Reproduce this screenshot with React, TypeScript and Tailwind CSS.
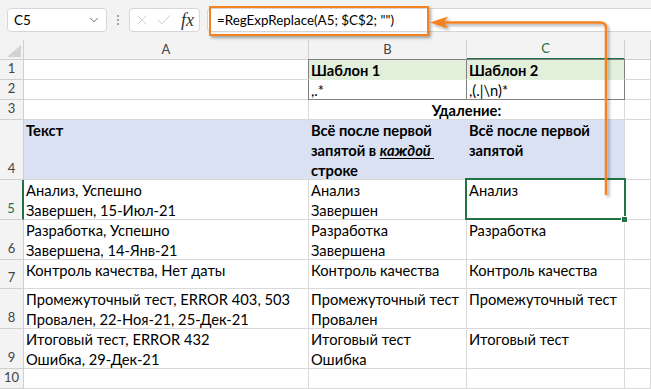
import { X, Check, ChevronDown } from "lucide-react";

const grid = "border-r border-b border-[#d9d9d9]";
const hdr = "bg-[#f3f3f3] border-r border-b border-[#cfcfcf] text-[13px] text-[#444]";

function RowNum({ n, active = false }: { n: number; active?: boolean }) {
  return (
    <div
      className={`${hdr} flex items-end justify-center leading-[19px] pb-px ${
        active ? "bg-[#dcdcdc] border-r-2 border-r-[#217346] text-[#217346]" : ""
      }`}
    >
      {n}
    </div>
  );
}

function Cell({ lines, className = "" }: { lines?: React.ReactNode[]; className?: string }) {
  return (
    <div className={`${grid} pl-[2px] leading-[20px] whitespace-nowrap overflow-visible ${className}`}>
      {lines?.map((l, i) => (
        <div key={i}>{l}</div>
      ))}
    </div>
  );
}

function Toolbar() {
  return (
    <div className="h-[40px] bg-[#f3f3f3] flex items-center pl-[7px]">
      <div className="w-[100px] h-[24px] bg-white border border-[#d6d6d6] rounded-[4px] flex items-center justify-between pl-[6px] pr-[5px] text-[13.5px] text-black">
        <span>C5</span>
        <ChevronDown size={14} strokeWidth={1.5} className="text-[#555]" />
      </div>
      <div className="w-[22px] flex flex-col items-center gap-[2px]">
        <span className="w-[2px] h-[2px] bg-[#8a8a8a] rounded-full" />
        <span className="w-[2px] h-[2px] bg-[#8a8a8a] rounded-full" />
        <span className="w-[2px] h-[2px] bg-[#8a8a8a] rounded-full" />
      </div>
      <div className="w-[71px] h-[24px] bg-white border border-[#d6d6d6] rounded-[4px] flex items-center pl-[4px]">
        <X size={16} strokeWidth={1.2} className="text-[#c4c4c4]" />
        <Check size={18} strokeWidth={1.2} className="text-[#c4c4c4] ml-[5px]" />
        <span className="font-['Liberation_Serif',serif] italic text-[18px] leading-none text-[#333] ml-[8px]">fx</span>
      </div>
      <div className="flex-1 ml-[7px] h-[24px] bg-white border border-[#d6d6d6] border-r-0 rounded-l-[4px] flex items-center pl-[9px] text-[13.4px] text-black">
        =RegExpReplace(A5; $C$2; "")
      </div>
    </div>
  );
}

export default function App() {
  return (
    <div className="w-[651px] h-[389px] bg-white overflow-hidden relative font-['Lato',sans-serif] text-[14.7px] text-black">
      <Toolbar />
      <div className="grid grid-cols-[24px_285px_158px_158px_1fr] grid-rows-[20px_20px_20px_20px_60px_40px_40px_29px_40px_40px_20px]">
        {/* column headers */}
        <div className={`${hdr} relative`}>
          <div className="absolute right-[2px] bottom-[2px] w-0 h-0 border-l-[14px] border-l-transparent border-b-[12px] border-b-[#d2d2d2]" />
        </div>
        <div className={`${hdr} flex items-center justify-center`}>A</div>
        <div className={`${hdr} flex items-center justify-center`}>B</div>
        <div className={`${hdr} flex items-center justify-center bg-[#dcdcdc] border-b-2 border-b-[#217346] text-[#217346]`}>C</div>
        <div className={hdr} />

        {/* row 1 */}
        <RowNum n={1} />
        <Cell />
        <Cell
          className="bg-[#e2efda] font-bold border-l border-l-[#808080] border-r-[#808080] border-t border-t-[#808080] border-b-[#e2efda] -ml-px -mt-px"
          lines={["Шаблон 1"]}
        />
        <Cell
          className="bg-[#e2efda] font-bold border-r-[#808080] border-t border-t-[#808080] border-b-[#e2efda] -mt-px"
          lines={["Шаблон 2"]}
        />
        <Cell />

        {/* row 2 */}
        <RowNum n={2} />
        <Cell />
        <Cell className="border-l border-l-[#808080] border-r-[#808080] border-b-[#808080] -ml-px" lines={[",.*"]} />
        <Cell className="border-r-[#808080] border-b-[#808080]" lines={[",(.|\\n)*"]} />
        <Cell />

        {/* row 3 */}
        <RowNum n={3} />
        <Cell />
        <div className={`${grid} col-span-2 text-center font-bold leading-[20px]`}>Удаление:</div>
        <Cell />

        {/* row 4 */}
        <RowNum n={4} />
        <Cell className="bg-[#d9e1f2] border-r-[#d9e1f2] font-bold" lines={["Текст"]} />
        <Cell
          className="bg-[#d9e1f2] border-r-[#d9e1f2] font-bold"
          lines={[
            "Всё после первой",
            <>
              запятой в <span className="italic underline underline-offset-2">каждой&nbsp;</span>
            </>,
            "строке",
          ]}
        />
        <Cell className="bg-[#d9e1f2] font-bold" lines={["Всё после первой", "запятой"]} />
        <Cell />

        {/* row 5 */}
        <RowNum n={5} active />
        <Cell lines={["Анализ, Успешно", "Завершен, 15-Июл-21"]} />
        <Cell lines={["Анализ", "Завершен"]} />
        <Cell lines={["Анализ"]} />
        <Cell />

        {/* row 6 */}
        <RowNum n={6} />
        <Cell lines={["Разработка, Успешно", "Завершена, 14-Янв-21"]} />
        <Cell lines={["Разработка", "Завершена"]} />
        <Cell lines={["Разработка"]} />
        <Cell />

        {/* row 7 */}
        <RowNum n={7} />
        <Cell lines={["Контроль качества, Нет даты"]} />
        <Cell lines={["Контроль качества"]} />
        <Cell lines={["Контроль качества"]} />
        <Cell />

        {/* row 8 */}
        <RowNum n={8} />
        <Cell lines={["Промежуточный тест, ERROR 403, 503", "Провален, 22-Ноя-21, 25-Дек-21"]} />
        <Cell lines={["Промежуточный тест", "Провален"]} />
        <Cell lines={["Промежуточный тест"]} />
        <Cell />

        {/* row 9 */}
        <RowNum n={9} />
        <Cell lines={["Итоговый тест, ERROR 432", "Ошибка, 29-Дек-21"]} />
        <Cell lines={["Итоговый тест", "Ошибка"]} />
        <Cell lines={["Итоговый тест"]} />
        <Cell />

        {/* row 10 */}
        <RowNum n={10} />
        <Cell />
        <Cell />
        <Cell />
        <Cell />
      </div>

      {/* selected cell C5 */}
      <div className="absolute left-[465px] top-[178px] w-[161px] h-[42px] border-2 border-[#217346] pointer-events-none" />
      <div className="absolute left-[621px] top-[216px] w-[7px] h-[7px] bg-[#217346] border border-white pointer-events-none" />

      {/* annotation */}
      <div className="absolute left-[209px] top-[6px] w-[220px] h-[30px] border-2 border-[#f58220] shadow-[2px_2px_3px_rgba(0,0,0,0.35)] pointer-events-none" />
      <svg className="absolute inset-0 pointer-events-none" width="651" height="389">
        <defs>
          <filter id="sh" x="-20%" y="-20%" width="140%" height="140%">
            <feDropShadow dx="2" dy="2" stdDeviation="1.5" floodColor="#000" floodOpacity="0.35" />
          </filter>
        </defs>
        <g filter="url(#sh)">
          <path d="M606 195 V28 Q606 22.5 600 22.5 H444" fill="none" stroke="#f58220" strokeWidth="2.5" />
          <polygon points="430,22.5 448,16.5 444,22.5 448,28.5" fill="#f58220" />
        </g>
      </svg>
    </div>
  );
}
